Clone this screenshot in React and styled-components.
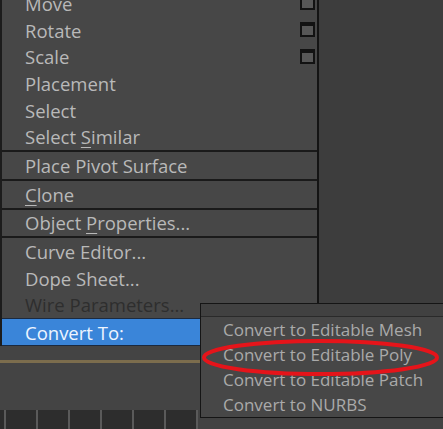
import React from "react";
import styled, { createGlobalStyle } from "styled-components";

const Global = createGlobalStyle`
  html, body { margin: 0; padding: 0; background: #3d3d3d; }
  body { font-family: "Open Sans", "Noto Sans", sans-serif; }
`;

const Page = styled.div`
  position: relative;
  width: 443px;
  height: 429px;
  overflow: hidden;
  background: #3d3d3d;
  display: flex;
  flex-direction: column;
`;

const Menu = styled.div`
  width: 315px;
  margin-top: -10px;
  background: #474747;
  border-left: 2px solid #1c1c1c;
  border-right: 2px solid #141414;
  display: flex;
  flex-direction: column;
`;

const Separator = styled.div`
  height: 2px;
  background: #1a1a1a;
`;

const Row = styled.div`
  position: relative;
  height: 26.7px;
  display: flex;
  align-items: center;
  padding-left: 23px;
  font-size: 18.5px;
  color: ${(p) => (p.$disabled ? "#2e2e2e" : p.$active ? "#eef5ff" : "#b9b9b9")};
  background: ${(p) => (p.$active ? "#3a85d9" : "transparent")};
  ${(p) =>
    p.$active &&
    `border-top: 1.5px solid #1b2a40; border-bottom: 1.5px solid #1b2a40; height: 25.5px;`}
  white-space: nowrap;
  box-sizing: content-box;
`;

const Label = styled.span`
  white-space: pre;
`;

const Key = styled.span`
  text-decoration: underline;
  text-decoration-thickness: 1px;
  text-underline-offset: 3px;
`;

const OptionBox = styled.span`
  position: absolute;
  left: 298px;
  top: 50%;
  width: 11px;
  height: 9px;
  margin-top: -8px;
  background: #575757;
  border: 2px solid #121212;
  border-top-width: 4px;
`;

const Lower = styled.div`
  flex: 1;
  background: #444444;
  display: flex;
  flex-direction: column;
`;

const GoldLine = styled.div`
  margin-top: 14px;
  height: 3px;
  background: #7c6d4d;
`;

const Spacer = styled.div`
  flex: 1;
`;

const Track = styled.div`
  height: 19px;
  display: flex;
  background: #424242;
`;

const TrackStart = styled.div`
  width: 4px;
  background: #2c2c2c;
`;

const Cell = styled.div`
  width: 30px;
  border-left: 2px solid #5a5a5a;
  background: #2d2d2d;
`;

const TrackEnd = styled.div`
  width: 2px;
  background: #5a5a5a;
`;

const SubMenu = styled.div`
  position: absolute;
  left: 200px;
  top: 303px;
  width: 250px;
  height: 113px;
  background: #474747;
  border: 1.5px solid #151515;
  display: flex;
  flex-direction: column;
`;

const SubHeader = styled.div`
  height: 12px;
  background: #414141;
  border-bottom: 1px solid #2a2a2a;
`;

const SubItem = styled.div`
  height: 25px;
  display: flex;
  align-items: center;
  padding-left: 22px;
  font-size: 17px;
  color: #aaaaaa;
  white-space: nowrap;
`;

const Ring = styled.svg`
  position: absolute;
  left: 200px;
  top: 337px;
  overflow: visible;
`;

export default function App() {
  return (
    <>
      <Global />
      <Page>
        <Menu>
          <Row><Label>Move</Label><OptionBox /></Row>
          <Row><Label>Rotate</Label><OptionBox /></Row>
          <Row><Label>Scale</Label><OptionBox /></Row>
          <Row><Label>Placement</Label></Row>
          <Row><Label>Select</Label></Row>
          <Row><Label>Select <Key>S</Key>imilar</Label></Row>
          <Separator />
          <Row><Label>Place Pivot Surface</Label></Row>
          <Separator />
          <Row><Label><Key>C</Key>lone</Label></Row>
          <Separator />
          <Row><Label>Object <Key>P</Key>roperties...</Label></Row>
          <Separator />
          <Row><Label>Curve Editor...</Label></Row>
          <Row><Label>Dope Sheet...</Label></Row>
          <Row $disabled><Label>Wire Parameters...</Label></Row>
          <Row $active><Label>Convert To:</Label></Row>
        </Menu>
        <Lower>
          <GoldLine />
          <Spacer />
          <Track>
            <TrackStart />
            {[0, 1, 2, 3, 4, 5].map((i) => (
              <Cell key={i} />
            ))}
            <TrackEnd />
          </Track>
        </Lower>
        <SubMenu>
          <SubHeader />
          <SubItem>Convert to Editable Mesh</SubItem>
          <SubItem>Convert to Editable Poly</SubItem>
          <SubItem>Convert to Editable Patch</SubItem>
          <SubItem>Convert to NURBS</SubItem>
        </SubMenu>
        <Ring width="243" height="42" viewBox="0 0 243 42">
          <ellipse cx="120.5" cy="20.5" rx="116.5" ry="16.5" fill="none" stroke="#e5141a" strokeWidth="4" />
        </Ring>
      </Page>
    </>
  );
}
